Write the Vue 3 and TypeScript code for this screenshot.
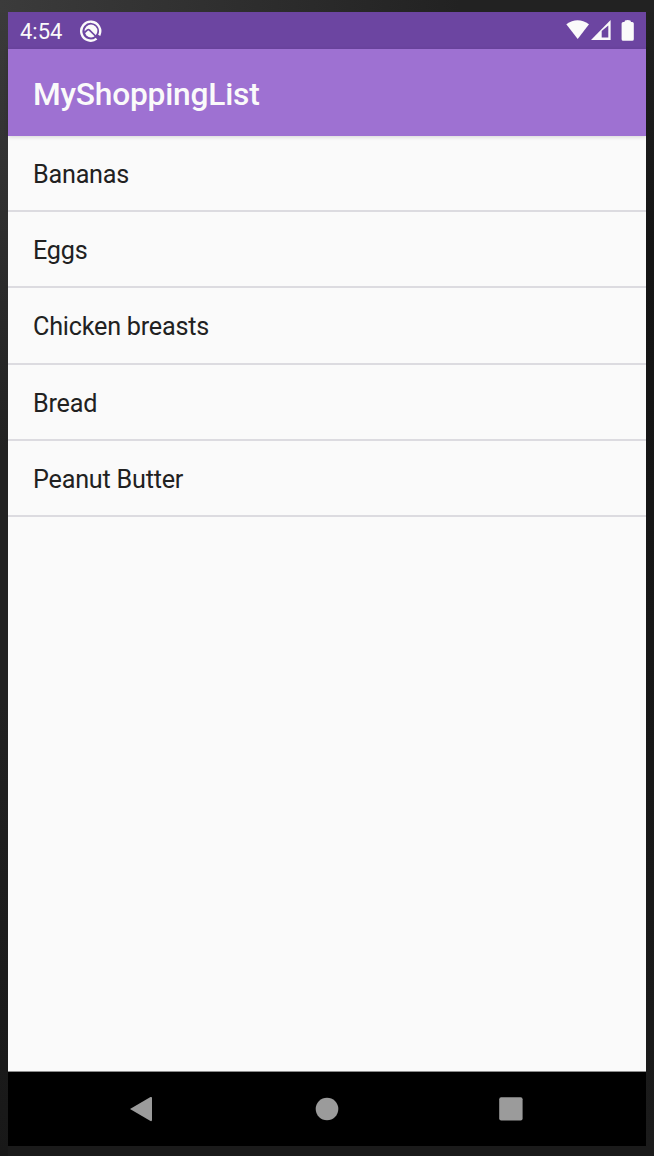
<script setup lang="ts">
const items: string[] = ['Bananas', 'Eggs', 'Chicken breasts', 'Bread', 'Peanut Butter']
</script>

<template>
  <div class="device">
    <main class="screen">
      <header class="status">
        <span class="clock">4:54</span>
        <svg class="debug" width="24" height="24" viewBox="0 0 24 24">
          <path d="M17.600 19.600A9.500 9.500 0 1 1 20.200 16.400" fill="none" stroke="#fafafa" stroke-width="2.4" />
          <circle cx="12" cy="12" r="6.400" fill="#fafafa" />
          <path d="M5.500 13.500 8.500 10.900q1-.7 2 .2L19 19.500" fill="none" stroke="#6c45a1" stroke-width="1.700" />
        </svg>
        <svg class="signals" width="76" height="30" viewBox="0 0 76 30">
          <path d="M2.300 8.300Q13.500 .2 25 8.300L13.700 23Z" fill="#fafafa" />
          <path d="M46.600 4v20H27Z" fill="#fafafa" />
          <path d="M44.300 9.500v12H37.700v-6.500Z" fill="#6c45a1" />
          <path d="M61 4.400Q63.700 3.500 66.400 4.400L67 6h1.200q1.600 0 1.600 1.600v15.600q0 1.500-1.600 1.500h-9q-1.600 0-1.600-1.500V7.600Q57.600 6 59.200 6H60.400Z" fill="#fafafa" />
        </svg>
      </header>
      <div class="toolbar"><h1>MyShoppingList</h1></div>
      <ul class="list">
        <li v-for="item in items" :key="item">{{ item }}</li>
      </ul>
      <nav class="nav">
        <svg width="26" height="28" viewBox="0 0 26 28"><path d="M0 14 20.500 2q1.500-.5 1.500 1v22q0 1.500-1.500 1Z" fill="#9b9b9b" /></svg>
        <svg width="26" height="28" viewBox="0 0 26 28"><circle cx="13" cy="14" r="11.300" fill="#9b9b9b" /></svg>
        <svg width="26" height="28" viewBox="0 0 26 28"><rect x="1.200" y="2.200" width="23.400" height="23.400" rx="2" fill="#9b9b9b" /></svg>
      </nav>
    </main>
  </div>
</template>

<style>
body {
  background: #1b1b1b;
}
</style>

<style scoped>
.device {
  box-sizing: border-box;
  height: 1156px;
  padding: 12px 8px 10px;
  font-family: Roboto, "Liberation Sans", sans-serif;
  background:
    linear-gradient(90deg, #3b3b3b, #222 460px) top / 100% 12px no-repeat,
    linear-gradient(#3b3b3b, #222 450px, #222 700px, #181818) left / 8px 100% no-repeat,
    linear-gradient(#222, #141414 250px, #1b1b1b) right / 8px 100% no-repeat,
    #1b1b1b;
}
.screen {
  display: flex;
  flex-direction: column;
  height: 1134px;
  background: #fafafa;
}
.status {
  display: flex;
  flex: none;
  align-items: center;
  height: 37px;
  padding: 0 6px 0 12px;
  background: #6c45a1;
  color: #fafafa;
}
.clock {
  padding-top: 2px;
  font-size: 22px;
  line-height: 35px;
}
.debug {
  margin-left: 17px;
}
.signals {
  margin-left: auto;
}
.toolbar {
  z-index: 1;
  flex: none;
  height: 87px;
  padding-left: 25px;
  background: #9e71d2;
  box-shadow: 0 1px 4px rgba(0, 0, 0, 0.15);
}
h1 {
  margin: 0;
  color: #fafafa;
  font-size: 31.7px;
  font-weight: 500;
  letter-spacing: -0.2px;
  line-height: 91px;
}
.list {
  flex: 1;
  margin: 0;
  padding: 0;
  list-style: none;
}
li {
  box-sizing: border-box;
  height: 76.2px;
  padding-left: 25px;
  border-bottom: 2px solid #dcdbe0;
  color: #212121;
  font-size: 25.2px;
  letter-spacing: -0.22px;
  line-height: 78px;
}
.nav {
  display: grid;
  flex: none;
  grid-template-columns: repeat(3, 26px);
  column-gap: 158px;
  justify-content: center;
  align-items: center;
  height: 75px;
  box-sizing: border-box;
  border-top: 1px solid #8d8d8d;
  background: #000;
}
</style>
